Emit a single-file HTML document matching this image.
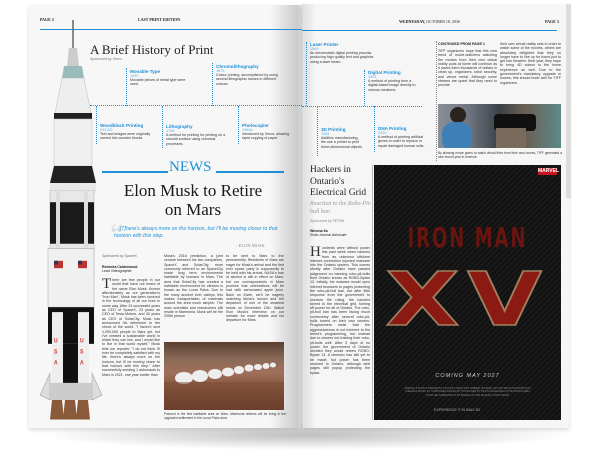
<!DOCTYPE html>
<html><head><meta charset="utf-8"><style>
*{margin:0;padding:0;box-sizing:border-box}
body{width:608px;height:469px;background:#fff;position:relative;overflow:hidden;font-family:"Liberation Sans",sans-serif;color:#222}
.abs{position:absolute}
.serif{font-family:"Liberation Serif",serif}
.t{font-size:3.6px;line-height:4.3px;text-align:justify;overflow:hidden;color:#333}
.bl{color:#1e8fd6}
.tl h4{font-size:4.6px;color:#1e8fd6;font-weight:bold}
.tl .y{font-size:3.8px;color:#5ab0e8}
.tl p{font-size:3.6px;line-height:4.3px;color:#333}
.dv{border-left:1px dotted #1e8fd6}
</style></head><body>
<div class="abs" style="left:40px;top:420px;width:530px;height:30px;background:radial-gradient(ellipse at center,rgba(0,0,0,.25),rgba(0,0,0,0) 70%)"></div>
<div class="abs" style="left:29px;top:5px;width:272px;height:423px;background:#f7f7f7;box-shadow:0 2px 4px rgba(0,0,0,.15)"></div>
<div class="abs" style="left:270px;top:5px;width:34px;height:423px;background:linear-gradient(90deg,rgba(0,0,0,0),rgba(0,0,0,.18) 80%,rgba(0,0,0,.05))"></div>
<div class="abs" style="left:302px;top:4px;width:267px;height:424px;background:#f6f6f6;box-shadow:0 2px 4px rgba(0,0,0,.15)"></div>
<div class="abs" style="left:302px;top:4px;width:14px;height:424px;background:linear-gradient(90deg,rgba(0,0,0,.1),rgba(0,0,0,0))"></div>
<div class="abs" style="left:566px;top:4px;width:5px;height:194px;background:#ddd"></div>

<div class="abs serif" style="left:40px;top:17px;font-size:4px;font-weight:bold">PAGE 2</div>
<div class="abs serif" style="left:138px;top:17px;font-size:4px;font-weight:bold">LAST PRINT EDITION</div>
<div class="abs" style="left:40px;top:29px;width:262px;height:1px;background:#1e8fd6"></div>
<div class="abs serif" style="left:399px;top:19px;font-size:4px"><b>WEDNESDAY,</b> OCTOBER 18, 2036</div>
<div class="abs serif" style="left:545px;top:19px;font-size:4px;font-weight:bold">PAGE 3</div>
<div class="abs" style="left:302px;top:30px;width:255px;height:1px;background:#1e8fd6"></div>

<!-- rocket -->
<svg class="abs" style="left:40px;top:18px" width="66" height="175" viewBox="0 0 66 175">
<line x1="33" y1="2" x2="33" y2="30" stroke="#666" stroke-width="1.5"/>
<path d="M29 30 L37 30 L39 48 L27 48Z" fill="#ccc"/>
<path d="M24 48 L42 48 L44 60 L22 60Z" fill="#9bb"/>
<path d="M22 60 L44 60 L52 100 L14 100Z" fill="#eee" stroke="#bbb" stroke-width=".5"/>
<rect x="14" y="95" width="38" height="6" fill="#222"/>
<rect x="14" y="101" width="38" height="47" fill="#f0f0f0" stroke="#bbb" stroke-width=".5"/>
<path d="M14 148 L52 148 L56 165 L10 165Z" fill="#222"/>
<rect x="10" y="165" width="46" height="10" fill="#e8e8e8"/>
</svg>
<svg class="abs" style="left:38px;top:190px" width="66" height="232" viewBox="0 0 66 190" preserveAspectRatio="none">
<rect x="12" y="0" width="44" height="70" fill="#e8e8e8" stroke="#aaa" stroke-width=".5"/>
<rect x="12" y="10" width="44" height="34" fill="#1a1a1a"/>
<rect x="18" y="0" width="4" height="110" fill="#ddd"/><rect x="46" y="0" width="4" height="110" fill="#ddd"/>
<rect x="10" y="48" width="46" height="48" fill="#f0f0f0" stroke="#aaa" stroke-width=".5"/>
<rect x="16" y="58" width="9" height="6" fill="#b33"/><rect x="16" y="58" width="4" height="3" fill="#335"/>
<rect x="40" y="58" width="9" height="6" fill="#b33"/><rect x="40" y="58" width="4" height="3" fill="#335"/>
<rect x="10" y="96" width="46" height="30" fill="#111"/>
<rect x="14" y="100" width="11" height="60" fill="#eee"/><rect x="40" y="100" width="11" height="60" fill="#eee"/>
<text x="16" y="125" font-size="5" fill="#c33" font-weight="bold">U</text><text x="42" y="125" font-size="5" fill="#c33" font-weight="bold">U</text>
<text x="16" y="134" font-size="5" fill="#c33" font-weight="bold">S</text><text x="42" y="134" font-size="5" fill="#c33" font-weight="bold">S</text>
<text x="16" y="143" font-size="5" fill="#c33" font-weight="bold">A</text><text x="42" y="143" font-size="5" fill="#c33" font-weight="bold">A</text>
<rect x="25" y="126" width="15" height="34" fill="#111"/>
<path d="M2 168 L12 150 L12 172Z M64 168 L54 150 L54 172Z" fill="#ddd" stroke="#999" stroke-width=".5"/>
<path d="M12 158 L54 158 L54 172 L12 172Z" fill="#ccc"/>
<g fill="#8a5a3a"><path d="M14 172h10l2 16h-14z"/><path d="M27 172h10l2 16h-14z"/><path d="M40 172h10l2 16h-14z"/></g>
</svg>

<div class="abs serif" style="left:90px;top:42px;font-size:13px;color:#222">A Brief History of Print</div>
<div class="abs" style="left:90px;top:57px;font-size:3.5px;font-style:italic;color:#777">Sponsored by Xerox</div>
<div class="abs dv" style="left:126px;top:68px;height:38px"></div>
<div class="abs tl" style="left:130px;top:69px;width:60px"><h4>Movable Type</h4><div class="y">1040</div><p>Movable pieces of metal type were used.</p></div>
<div class="abs dv" style="left:212px;top:63px;height:43px"></div>
<div class="abs tl" style="left:216px;top:64px;width:64px"><h4>Chromolithography</h4><div class="y">1875</div><p>Colour printing, accomplished by using several lithographic stones in different colours.</p></div>
<div class="abs" style="left:90px;top:105px;width:212px;border-top:1.5px dotted #1e8fd6"></div>
<div class="abs" style="left:302px;top:106px;width:120px;border-top:1.5px dotted #1e8fd6"></div>
<div class="abs dv" style="left:96px;top:106px;height:38px"></div>
<div class="abs tl" style="left:100px;top:123px;width:56px"><h4>Woodblock Printing</h4><div class="y">200 AD</div><p>Text and images were originally carved into wooden blocks.</p></div>
<div class="abs dv" style="left:162px;top:106px;height:42px"></div>
<div class="abs tl" style="left:166px;top:124px;width:62px"><h4>Lithography</h4><div class="y">1796</div><p>A method for printing for printing on a smooth surface using chemical processes.</p></div>
<div class="abs dv" style="left:238px;top:106px;height:38px"></div>
<div class="abs tl" style="left:242px;top:123px;width:56px"><h4>Photocopier</h4><div class="y">1960s</div><p>Introduced by Xerox, allowing rapid copying of paper</p></div>

<div class="abs" style="left:102px;top:171px;width:66px;height:1.5px;background:#1e8fd6"></div>
<div class="abs" style="left:216px;top:171px;width:68px;height:1.5px;background:#1e8fd6"></div>
<div class="abs serif bl" style="left:169px;top:159px;font-size:15px">NEWS</div>
<div class="abs serif" style="left:100px;top:181px;width:186px;text-align:center;font-size:17px;line-height:19px;color:#1a1a1a">Elon Musk to Retire<br>on Mars</div>
<div class="abs serif" style="left:110px;top:218px;font-size:30px;color:#ddd">“</div>
<div class="abs bl" style="left:114px;top:226px;width:170px;font-size:5.2px;line-height:6.5px;font-style:italic">... [T]here's always more on the horizon, but I'll be moving closer to that horizon with this step.</div>
<div class="abs serif" style="left:236px;top:243px;font-size:4.5px;color:#888">- ELON MUSK</div>

<div class="abs" style="left:102px;top:254px;font-size:3.5px;font-style:italic;color:#666">Sponsored by SpaceX</div>
<div class="abs" style="left:102px;top:265px;font-size:3.5px;line-height:4.3px"><b>Rebecka Calderwood</b><br>Lead Videographer</div>
<div class="abs t" style="left:102px;top:278px;width:58px;height:145px"><span class="serif" style="float:left;font-size:15px;line-height:12px;margin-right:1px">T</span>here are few people in our world that have not heard of the name Elon Musk. Known affectionately as our generation's "Iron Man", Musk has been involved in the technology of all our lives in some way. After 24 successful years as CEO of SpaceX, 23 years as CEO of Tesla Motors, and 30 years as CEO of SolarCity, Musk has announced his retirement to the shock of the world. "I haven't sent 1,000,000 people to Mars yet, but I've created a sustainable world in which they can live, and I would like to live in that world myself," Musk tells our reporter. "I do not think I'll ever be completely satisfied with my life, there's always more on the horizon, but I'll be moving closer to that horizon with this step." After successfully sending 1 astronauts to Mars in 2021, one year earlier than</div>
<div class="abs t" style="left:164px;top:254px;width:59px;height:86px">Musk's 2016 prediction, a joint venture between his two companies, SpaceX and SolarCity, more commonly referred to as SpaceCity made long term environments habitable by humans in Mars. The area that SolarCity has created a habitable environment for citizens is known as the Lunar Palus. Due to the many ancient river valleys, this makes transportation of materials around the area much simpler. The main scientists and researchers still reside in Marmonia. Musk will be the 205th person</div>
<div class="abs t" style="left:226px;top:254px;width:58px;height:86px">to be sent to Mars to live permanently. Residents of Mars are eager for Musk's arrival and the first ever space party is supposedly to be held with his arrival. NASA's ban of alcohol is still in effect on Mars, but our correspondents in Mars promise that celebrations will be had with carbonated apple juice. Back on Earth, we'll be eagerly matching Musk's launch and the departure of one of the smartest minds on December 13th. Watch Elon Musk's interview on our website for more details and his departure for Mars.</div>
<div class="abs" style="left:164px;top:342px;width:120px;height:68px;background:linear-gradient(180deg,#5a3f30 0%,#8a6a58 25%,#a0705a 45%,#7a4a35 75%,#5a3526 100%);overflow:hidden">
<svg width="120" height="68"><g fill="#eee">
<ellipse cx="20" cy="36" rx="9" ry="6"/><ellipse cx="36" cy="34" rx="8" ry="6"/><ellipse cx="51" cy="32" rx="7" ry="5"/><ellipse cx="64" cy="30" rx="6" ry="4.5"/><ellipse cx="75" cy="28" rx="5" ry="4"/><ellipse cx="85" cy="26" rx="4.5" ry="3.5"/><ellipse cx="94" cy="25" rx="4" ry="3"/><ellipse cx="102" cy="24" rx="3.5" ry="3"/><ellipse cx="109" cy="23" rx="3" ry="2.5"/></g>
<rect x="0" y="40" width="120" height="28" fill="#7a4a33" opacity=".5"/></svg></div>
<div class="abs t" style="left:164px;top:412px;width:122px;font-size:3.2px">Pictured is the first habitable area on Mars. Marmonia citizens will be living in the upgraded settlement in the Lunar Palus area.</div>

<div class="abs dv" style="left:306px;top:42px;height:64px"></div>
<div class="abs tl" style="left:310px;top:42px;width:70px"><h4>Laser Printer</h4><div class="y">1969</div><p>An electrostatic digital printing process producing high quality text and graphics using a laser beam.</p></div>
<div class="abs dv" style="left:364px;top:70px;height:36px"></div>
<div class="abs tl" style="left:368px;top:70px;width:50px"><h4>Digital Printing</h4><div class="y">1991</div><p>A method of printing from a digital-based image directly to various mediums.</p></div>
<div class="abs dv" style="left:317px;top:106px;height:50px"></div>
<div class="abs tl" style="left:321px;top:127px;width:42px"><h4>3D Printing</h4><div class="y">1984</div><p>Additive manufacturing, the use a printer to print three-dimensional objects.</p></div>
<div class="abs dv" style="left:374px;top:106px;height:46px"></div>
<div class="abs tl" style="left:378px;top:126px;width:50px"><h4>DNA Printing</h4><div class="y">2020</div><p>A method of printing artificial genes in order to replace or repair damaged human cells.</p></div>
<div class="abs dv" style="left:436px;top:41px;height:120px;border-color:#888"></div>

<div class="abs" style="left:438px;top:42px;font-size:3.6px;font-weight:bold">CONTINUED FROM PAGE 1</div>
<div class="abs t" style="left:438px;top:49px;width:59px;height:52px">TIFF organizers hope that this new trend of movie-watchers watching the movies from their own virtual reality pods at home will continue as it saves them thousands of dollars in clean up, organizers, robot security, and venue rental. Although some viewers are upset that they need to provide</div>
<div class="abs t" style="left:500px;top:42px;width:61px;height:59px">their own virtual reality sets in order to watch some of the movies, others are absolutely delighted that they no longer have to line up for hours just to get into theatres. Next year, they hope to bring 4D videos to the home experience as well. Due to the government's mandatory upgrade in homes, this should bode well for TIFF organizers.</div>
<div class="abs" style="left:438px;top:104px;width:123px;height:44px;background:linear-gradient(90deg,#8a8f96 0%,#6f7680 25%,#3c4048 50%,#6a5e52 70%,#5d8a8a 100%);overflow:hidden">
<div class="abs" style="left:12px;top:3px;width:16px;height:16px;border-radius:50%;background:#2a2320"></div>
<div class="abs" style="left:4px;top:18px;width:30px;height:30px;border-radius:40%;background:#3f7fb8"></div>
<div class="abs" style="left:56px;top:10px;width:42px;height:17px;border-radius:4px;background:#111"></div>
<div class="abs" style="left:58px;top:24px;width:30px;height:20px;background:#7a6a5c"></div>
</div>
<div class="abs t" style="left:438px;top:151px;width:124px;font-size:3.2px">By allowing movie goers to watch virtual films from their own homes, TIFF generated a new record year in revenue.</div>

<div class="abs serif" style="left:310px;top:165px;width:64px;font-size:9.5px;line-height:11.5px;color:#222">Hackers in Ontario's Electrical Grid</div>
<div class="abs serif" style="left:310px;top:201px;width:64px;font-size:6px;line-height:7.5px;font-style:italic;color:#999">Reaction to the Robo-Pit-bull ban</div>
<div class="abs" style="left:310px;top:219px;font-size:3.5px;font-style:italic;color:#888">Sponsored by PETRA</div>
<div class="abs" style="left:310px;top:229px;font-size:3.5px;line-height:4.3px"><b>Winona Ito</b><br><i>Robo-Journal Advocate</i></div>
<div class="abs dv" style="left:372px;top:165px;height:255px;border-left:1px solid #bbb"></div>
<div class="abs t" style="left:310px;top:246px;width:60px;height:176px"><span class="serif" style="float:left;font-size:15px;line-height:12px;margin-right:1px">H</span>undreds were without power this past week when hackers from an unknown offshore internet connection injected malware into the Ontario system. This comes shortly after Ontario have passed judgement on banning robo-pit-bulls from Ontario known as ROBO-Bylaw 13. Initially, the malware would open internet browsers to pages protecting the robo-pit-bull ban, but after little response from the government to overturn the ruling, the hackers turned to the electrical grid, turning off power for all of Ontario. The robo-pit-bull ban has been facing much controversy after several robo-pit-bulls turned on their own owners. Programmers insist that the aggressiveness is not inherent to the breed's programming, but instead due to owners not training their robo-pit-bulls well. After 3 days of no power, the government of Ontario decided they would review ROBO-Bylaw 13. A decision has still yet to be made, but power has been restored to Ontario, although web pages still popup protecting the bylaw.</div>

<div class="abs" style="left:374px;top:165px;width:187px;height:255px;background:repeating-linear-gradient(135deg,#111 0 2px,#1a1a1a 2px 4px);overflow:hidden">
<div class="abs" style="left:164px;top:3px;width:19px;height:7px;background:#c8141e;color:#fff;font-size:5px;font-weight:bold;text-align:center;line-height:7px">MARVEL</div>
<div class="abs" style="left:0;top:60px;width:187px;text-align:center;font-family:'DejaVu Sans Condensed',sans-serif;font-size:20px;font-weight:bold;color:#6a1410;letter-spacing:2px;transform:scaleY(1.4)">IRON MAN</div>
<div class="abs" style="left:0;top:92px;width:187px;text-align:center;font-family:'DejaVu Sans',sans-serif;font-size:74px;font-weight:bold;color:#8a1a12;-webkit-text-stroke:1.5px #a08060;letter-spacing:6px;transform:scaleX(1.3)">XV</div>
<div class="abs" style="left:0;top:208px;width:187px;text-align:center;font-size:5.5px;color:#ccc;letter-spacing:1px;font-style:italic">COMING MAY 2027</div>
<div class="abs" style="left:30px;top:222px;width:127px;font-size:2.6px;line-height:3.3px;color:#888;text-align:center">MARVEL STUDIOS PRESENTS A FILM BY DIRECTOR ROBERT DOWNEY JR GWYNETH PALTROW DON CHEADLE MUSIC BY COMPOSER EDITED BY PRODUCED BY KEVIN FEIGE EXECUTIVE PRODUCERS STAN LEE SCREENPLAY BY BASED ON THE MARVEL COMIC BOOK</div>
<div class="abs" style="left:60px;top:243px;font-size:3.5px;color:#aaa">EXPERIENCE IT IN IMAX 3D</div>
</div>
</body></html>
